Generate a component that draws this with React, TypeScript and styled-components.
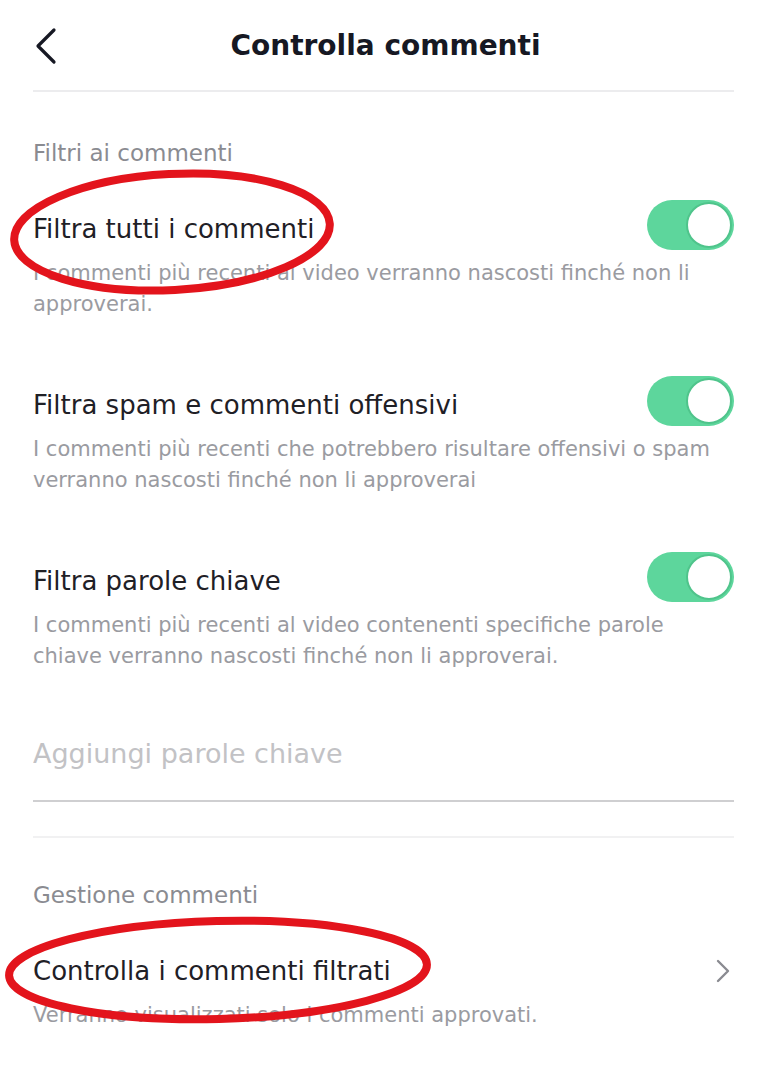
import styled, { createGlobalStyle } from 'styled-components'

const GlobalStyle = createGlobalStyle`
  html, body {
    margin: 0;
    padding: 0;
    background: #ffffff;
  }
  body {
    font-family: "DejaVu Sans", "Liberation Sans", Arial, sans-serif;
    color: #1f2026;
  }
`

type TSetting = {
  id: string,
  title: string,
  description: string,
  ring?: boolean
}

const filters: TSetting[] = [
  {
    id: 'all',
    title: 'Filtra tutti i commenti',
    description: 'I commenti più recenti al video verranno nascosti finché non li approverai.',
    ring: true
  },
  {
    id: 'spam',
    title: 'Filtra spam e commenti offensivi',
    description: 'I commenti più recenti che potrebbero risultare offensivi o spam verranno nascosti finché non li approverai'
  },
  {
    id: 'keywords',
    title: 'Filtra parole chiave',
    description: 'I commenti più recenti al video contenenti specifiche parole chiave verranno nascosti finché non li approverai.'
  }
]

function RedRing({ width, height, tilt }: { width: number, height: number, tilt: number }) {
  return (
    <RingSvg $w={width} $h={height} viewBox={`0 0 ${width} ${height}`}>
      <ellipse
        cx={width / 2}
        cy={height / 2}
        rx={width / 2 - 6}
        ry={height / 2 - 6}
        fill="none"
        stroke="#e3141c"
        strokeWidth={8}
        transform={`rotate(${tilt} ${width / 2} ${height / 2})`}
      />
    </RingSvg>
  )
}

function Toggle() {
  return (
    <Switch>
      <Knob />
    </Switch>
  )
}

function App() {
  return (
    <Page>
      <GlobalStyle />
      <Header>
        <BackButton aria-label="Indietro">
          <svg width="26" height="40" viewBox="0 0 26 40">
            <path d="M21 4 L5 20 L21 36" fill="none" stroke="#161823" strokeWidth="3.2" strokeLinecap="round" strokeLinejoin="round" />
          </svg>
        </BackButton>
        <HeaderTitle>Controlla commenti</HeaderTitle>
      </Header>

      <Section>
        <SectionLabel>Filtri ai commenti</SectionLabel>
        <SettingsList>
          {filters.map(item =>
            <Setting key={item.id}>
              <SettingTitle>
                {item.title}
                {item.ring && <RingSpot $left={-25} $top={-43}><RedRing width={328} height={128} tilt={-3} /></RingSpot>}
              </SettingTitle>
              <Toggle />
              <SettingDescription>{item.description}</SettingDescription>
            </Setting>
          )}
        </SettingsList>
        <KeywordInput placeholder="Aggiungi parole chiave" />
      </Section>

      <Section $divided>
        <SectionLabel>Gestione commenti</SectionLabel>
        <SettingsList>
          <Setting>
            <SettingTitle>
              Controlla i commenti filtrati
              <RingSpot $left={-30} $top={-38}><RedRing width={430} height={110} tilt={-1.5} /></RingSpot>
            </SettingTitle>
            <Chevron width="16" height="26" viewBox="0 0 16 26">
              <path d="M3 3 L13 13 L3 23" fill="none" stroke="#8a8b91" strokeWidth="2.4" strokeLinecap="round" strokeLinejoin="round" />
            </Chevron>
            <SettingDescription>Verranno visualizzati solo i commenti approvati.</SettingDescription>
          </Setting>
        </SettingsList>
      </Section>
    </Page>
  )
}
export default App

const Page = styled.div`
  padding: 0 33px;
  width: 767px;
  box-sizing: border-box;
  overflow: hidden;
`

const Header = styled.header`
  position: relative;
  display: flex;
  align-items: center;
  justify-content: center;
  height: 90px;
  border-bottom: 2px solid #ececee;
`

const BackButton = styled.button`
  position: absolute;
  left: 0;
  top: 26px;
  padding: 0;
  border: none;
  background: none;
  display: flex;
`

const HeaderTitle = styled.h1`
  margin: 0 0 0 4px;
  font-size: 28px;
  font-weight: 700;
  color: #161823;
`

const Section = styled.section<{ $divided?: boolean }>`
  padding-top: 46px;
  ${p => p.$divided && 'border-top: 2px solid #f1f1f2; padding-top: 42px; margin-top: 34px;'}
`

const SectionLabel = styled.div`
  font-size: 23px;
  line-height: 30px;
  color: #8a8b91;
`

const SettingsList = styled.ul`
  list-style: none;
  margin: 0;
  padding: 0;
`

const Setting = styled.li`
  display: grid;
  grid-template-columns: 1fr auto;
  align-items: center;
  row-gap: 11px;
  margin-top: 43px;
  & + & {
    margin-top: 68px;
  }
`

const SettingTitle = styled.div`
  position: relative;
  font-size: 26px;
  line-height: 36px;
  color: #1f2026;
`

const SettingDescription = styled.p`
  grid-column: 1 / -1;
  max-width: 690px;
  margin: 0;
  font-size: 21px;
  line-height: 30.5px;
  color: #9a9ba1;
`

const Switch = styled.div`
  width: 87px;
  height: 50px;
  border-radius: 25px;
  background: #5dd69c;
  display: flex;
  align-items: center;
  justify-content: flex-end;
  padding: 0 2px;
  box-sizing: border-box;
  margin: -11px 0 -3px;
`

const Knob = styled.div`
  width: 46px;
  height: 46px;
  border-radius: 50%;
  background: #ffffff;
  border: 2px solid #4fc48b;
  box-sizing: border-box;
`

const Chevron = styled.svg`
  margin: -5px 3px -5px 0;
`

const KeywordInput = styled.input`
  display: block;
  width: 100%;
  box-sizing: border-box;
  margin-top: 65px;
  padding: 0 0 28px;
  border: none;
  border-bottom: 2px solid #cfcfd1;
  font-family: inherit;
  font-size: 27px;
  line-height: 36px;
  outline: none;
  &::placeholder {
    color: #c2c2c5;
  }
`

const RingSpot = styled.span<{ $left: number, $top: number }>`
  position: absolute;
  left: ${p => p.$left}px;
  top: ${p => p.$top}px;
  pointer-events: none;
`

const RingSvg = styled.svg<{ $w: number, $h: number }>`
  display: block;
  width: ${p => p.$w}px;
  height: ${p => p.$h}px;
`
